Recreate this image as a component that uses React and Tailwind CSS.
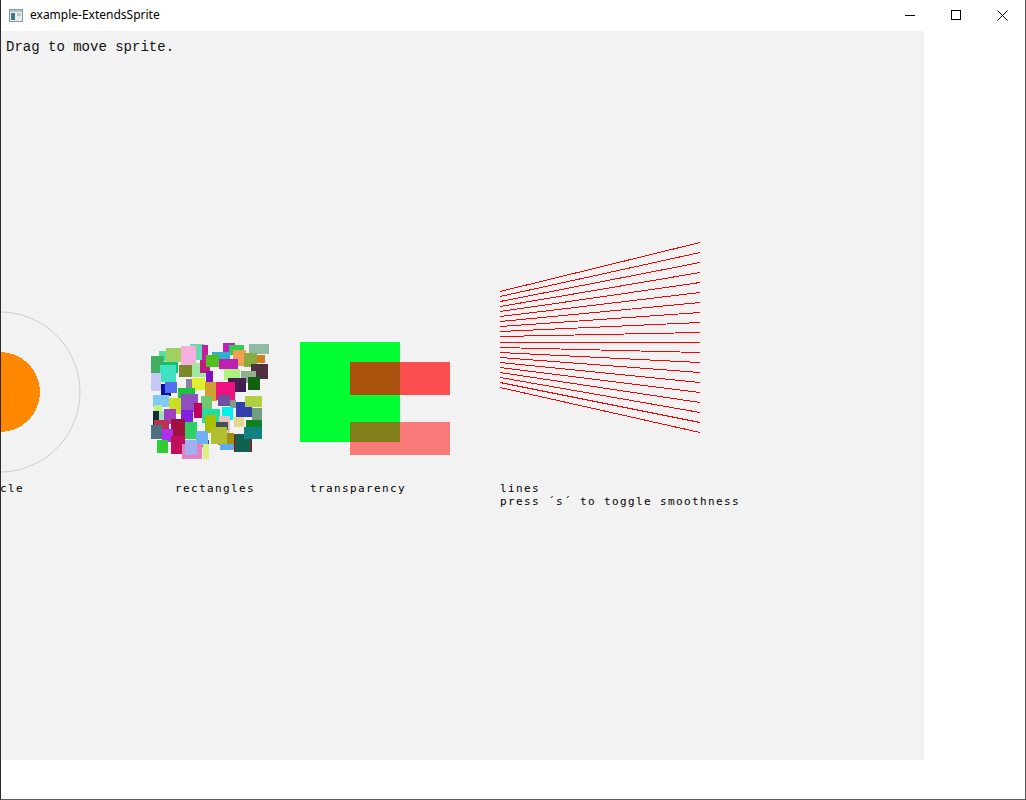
import React from "react";

const RECTS = [
  [249, 344, 20, 10, "#8fbca3"],
  [223, 343, 12, 10, "#c020c0"],
  [229, 345, 15, 10, "#2ecc50"],
  [190, 344, 14, 16, "#66d9b0"],
  [202, 345, 6, 15, "#c0209a"],
  [159, 351, 14, 10, "#4fe39f"],
  [166, 348, 20, 14, "#a0d060"],
  [181, 346, 15, 19, "#f5b0e0"],
  [151, 356, 13, 17, "#40b060"],
  [162, 362, 16, 11, "#10c070"],
  [160, 365, 16, 17, "#40e0c0"],
  [151, 373, 10, 18, "#c8c8f8"],
  [179, 365, 13, 12, "#7a8a2a"],
  [192, 363, 15, 14, "#a0e8a0"],
  [200, 360, 10, 13, "#c01880"],
  [212, 352, 18, 10, "#30b0d0"],
  [206, 355, 13, 12, "#50c020"],
  [233, 350, 13, 16, "#f0a050"],
  [244, 353, 13, 14, "#8aaa40"],
  [257, 355, 8, 8, "#d08020"],
  [219, 359, 19, 10, "#c020b0"],
  [251, 364, 17, 15, "#503040"],
  [224, 369, 16, 11, "#b0f080"],
  [241, 371, 15, 12, "#90b090"],
  [248, 377, 12, 13, "#106010"],
  [206, 371, 7, 13, "#8010c0"],
  [186, 379, 7, 11, "#9080a0"],
  [192, 378, 13, 12, "#e0f030"],
  [205, 382, 12, 19, "#d0a030"],
  [228, 378, 18, 14, "#402050"],
  [216, 382, 19, 18, "#f01080"],
  [161, 384, 10, 12, "#1010a0"],
  [165, 382, 12, 11, "#5070f0"],
  [178, 388, 17, 18, "#20c040"],
  [153, 395, 16, 12, "#80c8f8"],
  [154, 405, 8, 7, "#c0f080"],
  [169, 398, 13, 16, "#c8e020"],
  [181, 394, 17, 18, "#9050c0"],
  [201, 396, 11, 14, "#70c870"],
  [218, 395, 12, 11, "#7050a0"],
  [230, 400, 6, 8, "#8a9a8a"],
  [236, 402, 16, 15, "#3040b0"],
  [245, 396, 17, 11, "#b0d040"],
  [194, 403, 8, 15, "#c00060"],
  [222, 407, 11, 13, "#00f0f0"],
  [202, 409, 18, 14, "#20e0a0"],
  [181, 410, 12, 15, "#8020e0"],
  [158, 411, 6, 13, "#a0e0c0"],
  [153, 411, 6, 16, "#103030"],
  [164, 409, 12, 15, "#a040c0"],
  [234, 417, 10, 10, "#e0d890"],
  [252, 408, 10, 12, "#70a080"],
  [154, 420, 15, 14, "#c03050"],
  [151, 425, 11, 14, "#507080"],
  [171, 419, 14, 18, "#a01040"],
  [185, 422, 12, 17, "#30d060"],
  [219, 416, 11, 21, "#e8c0c0"],
  [216, 422, 12, 8, "#405060"],
  [205, 415, 11, 18, "#a8c000"],
  [246, 420, 16, 10, "#108020"],
  [218, 433, 16, 12, "#a09010"],
  [211, 427, 16, 17, "#b0c030"],
  [234, 434, 18, 18, "#c00000"],
  [235, 434, 16, 18, "#106050"],
  [244, 427, 18, 12, "#108080"],
  [220, 444, 14, 6, "#60a8f0"],
  [197, 440, 12, 7, "#2050c0"],
  [196, 431, 12, 15, "#70b0f0"],
  [162, 429, 11, 13, "#b030f0"],
  [157, 440, 11, 13, "#30cc30"],
  [171, 436, 14, 18, "#c0105a"],
  [203, 444, 6, 15, "#e0f080"],
  [182, 444, 20, 15, "#e880c0"],
  [185, 440, 12, 15, "#a0b0f0"],
];

const LINES = Array.from({ length: 20 }, (_, i) => ({
  y1: 291 + 5 * i + (i >= 10 ? 1 : 0),
  y2: 242 + 10 * i,
}));

const mono = { fontFamily: '"DejaVu Sans Mono", "Liberation Mono", monospace' };
const mono2 = { fontFamily: '"Liberation Mono", "DejaVu Sans Mono", monospace' };

export default function App() {
  return (
    <div className="w-[1026px] h-[800px] bg-white border-l border-l-[#2b2b2b] border-r border-r-[#5a5a5a] border-b border-b-[#5a5a5a] flex flex-col overflow-hidden">
      {/* title bar */}
      <div className="h-[31px] shrink-0 flex items-center relative" style={{ fontFamily: '"Noto Sans", "Open Sans", sans-serif' }}>
        <svg width="14" height="13" viewBox="0 0 14 13" className="ml-[8px] mt-[-1px]">
          <rect x="0.5" y="0.5" width="13" height="12" fill="#e8ecec" stroke="#8a9a9a" />
          <rect x="1" y="1" width="12" height="2" fill="#b8c4c8" />
          <rect x="2" y="4" width="4" height="7" fill="#3b7d86" />
          <rect x="8" y="4" width="4" height="3" fill="#c0c8c8" />
        </svg>
        <span className="ml-[7px] text-[12px] text-black leading-none mt-[-1px]">example-ExtendsSprite</span>
        <div className="absolute right-0 top-0 h-[30px] flex">
          <div className="w-[46px] h-[30px] flex items-center justify-center">
            <svg width="10" height="10" viewBox="0 0 10 10"><line x1="0" y1="5.5" x2="10" y2="5.5" stroke="#000" strokeWidth="1" /></svg>
          </div>
          <div className="w-[46px] h-[30px] flex items-center justify-center">
            <svg width="10" height="10" viewBox="0 0 10 10"><rect x="0.5" y="0.5" width="9" height="9" fill="none" stroke="#000" strokeWidth="1" /></svg>
          </div>
          <div className="w-[46px] h-[30px] flex items-center justify-center">
            <svg width="11" height="11" viewBox="0 0 11 11"><path d="M0.5 0.5 L10.5 10.5 M10.5 0.5 L0.5 10.5" stroke="#000" strokeWidth="1" /></svg>
          </div>
        </div>
      </div>

      {/* canvas */}
      <div className="w-[923px] h-[729px] bg-[#f2f2f2] relative overflow-hidden shrink-0">
        <svg width="923" height="729" className="absolute left-0 top-0" shapeRendering="crispEdges">
          <g transform="translate(-1,-31)">
            <circle cx="0" cy="392" r="80" fill="none" stroke="#cccccc" strokeWidth="1" shapeRendering="auto" />
            <circle cx="0" cy="392" r="40" fill="#ff8800" />
            {RECTS.map(([x, y, w, h, c], i) => (
              <rect key={i} x={x} y={y} width={w} height={h} fill={c} />
            ))}
            <rect x="300" y="342" width="100" height="100" fill="#00ff33" />
            <rect x="350" y="362" width="100" height="33" fill="rgba(255,0,0,0.675)" />
            <rect x="350" y="422" width="100" height="33" fill="rgba(255,0,0,0.5)" />
            {LINES.map((l, i) => (
              <line key={i} x1="500" y1={l.y1 + 0.5} x2="700" y2={l.y2 + 0.5} stroke="#ff0000" strokeWidth="1" />
            ))}
          </g>
        </svg>

        <span className="absolute left-[5px] top-[8px] text-[14px] leading-[17px] tracking-[0px] text-[#111] whitespace-pre" style={mono2}>Drag to move sprite.</span>

        <span className="absolute left-[-25px] top-[451px] text-[11px] leading-[13px] tracking-[1.38px] text-black whitespace-pre" style={mono}>circle</span>
        <span className="absolute left-[174px] top-[451px] text-[11px] leading-[13px] tracking-[1.38px] text-black whitespace-pre" style={mono}>rectangles</span>
        <span className="absolute left-[309px] top-[451px] text-[11px] leading-[13px] tracking-[1.38px] text-black whitespace-pre" style={mono}>transparency</span>
        <div className="absolute left-[499px] top-[451px] flex flex-col text-[11px] leading-[13px] tracking-[1.38px] text-black whitespace-pre" style={mono}>
          <span>lines</span>
          <span>press ´s´ to toggle smoothness</span>
        </div>
      </div>
    </div>
  );
}
